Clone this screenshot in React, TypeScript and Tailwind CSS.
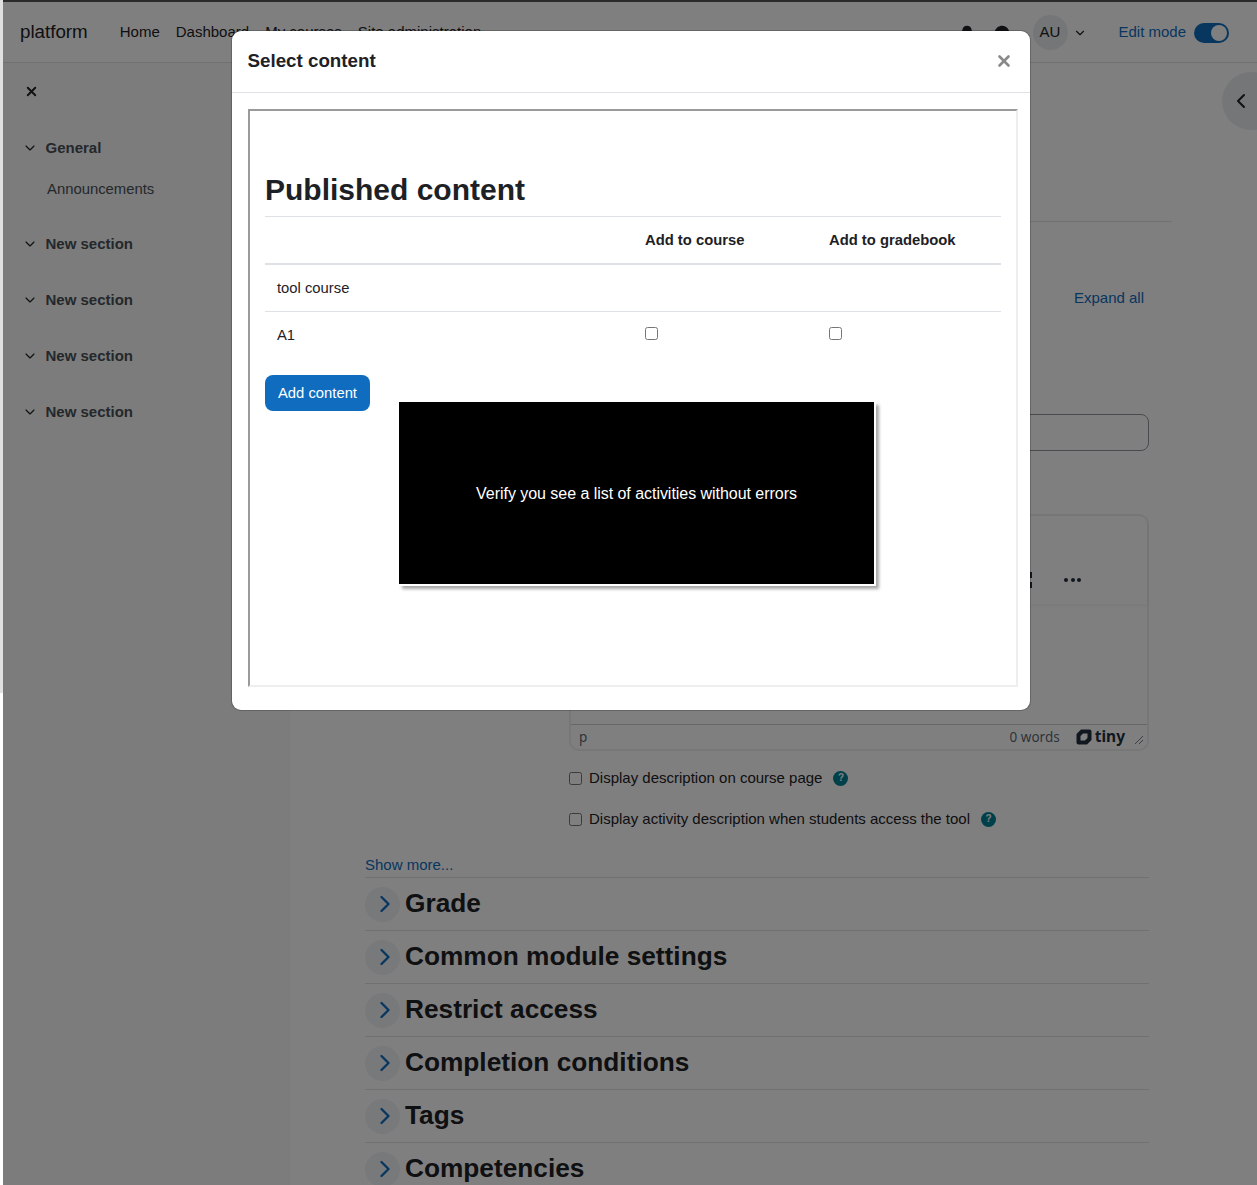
import { X, ChevronDown, ChevronRight, ChevronLeft, Bell, MessageCircle } from 'lucide-react';

const SECTIONS = ['New section', 'New section', 'New section', 'New section'];
const ACCORDION = ['Grade', 'Common module settings', 'Restrict access', 'Completion conditions', 'Tags', 'Competencies'];

function HelpDot() {
  return (
    <span className="ml-[11px] flex h-[15px] w-[15px] items-center justify-center rounded-full bg-[#008196] text-[10px] font-bold leading-none text-white">
      ?
    </span>
  );
}

function TinyLogo() {
  return (
    <svg width="16" height="16" viewBox="0 0 16 16">
      <path
        d="M5 0.5 L13.5 0.5 Q15.5 0.5 15.5 2.5 L15.5 11 L11 15.5 L2.5 15.5 Q0.5 15.5 0.5 13.5 L0.5 5 Z"
        fill="#222f3e"
      />
      <path d="M7 4.5 L11.5 4.5 L11.5 9 L9 11.5 L4.5 11.5 L4.5 7 Z" fill="#ffffff" />
    </svg>
  );
}

function Header() {
  return (
    <header className="flex h-[62px] shrink-0 items-center border-b border-[#dee2e6] bg-white pl-[17px] pr-[28px] pt-[2px]">
      <span className="text-[18.75px] text-[#1d2125]">platform</span>
      <nav className="ml-[32px] flex gap-[16px] text-[15px] text-[#1d2125]">
        <span>Home</span>
        <span>Dashboard</span>
        <span>My courses</span>
        <span>Site administration</span>
      </nav>
      <div className="ml-auto flex items-center">
        <Bell className="h-[16px] w-[16px] fill-[#1d2125] text-[#1d2125]" />
        <MessageCircle className="ml-[19px] h-[16px] w-[16px] fill-[#1d2125] text-[#1d2125]" />
        <span className="ml-[23px] flex h-[35px] w-[35px] items-center justify-center rounded-full bg-[#e9ecef] pr-[2px] text-[15px] text-[#1d2125]">
          AU
        </span>
        <ChevronDown className="ml-[5px] h-[14px] w-[14px] text-[#1d2125]" />
        <span className="ml-[31px] text-[15px] text-[#0f6cbf]">Edit mode</span>
        <span className="ml-[8px] flex h-[20px] w-[35px] items-center justify-end rounded-full bg-[#0f6cbf] pr-[2px]">
          <span className="h-[16px] w-[16px] rounded-full bg-white" />
        </span>
      </div>
    </header>
  );
}

function Sidebar() {
  return (
    <aside className="w-[287px] shrink-0 bg-[#f8f9fa] pl-[19px] text-[15px]">
      <X className="ml-[2px] mt-[21px] h-[15px] w-[15px] text-[#1d2125]" strokeWidth={3} />
      <div className="mt-[38px] flex items-center font-bold text-[#495057]">
        <ChevronDown className="h-[16px] w-[16px] text-[#1d2125]" strokeWidth={1.75} />
        <span className="ml-[7.5px]">General</span>
      </div>
      <div className="ml-[25px] mt-[18px] text-[14.85px] text-[#495057]">Announcements</div>
      <div className="mt-[33px] flex flex-col gap-[33.5px]">
        {SECTIONS.map((name, idx) => (
          <div key={idx} className="flex items-center font-bold text-[#495057]">
            <ChevronDown className="h-[16px] w-[16px] text-[#1d2125]" strokeWidth={1.75} />
            <span className="ml-[7.5px]">{name}</span>
          </div>
        ))}
      </div>
    </aside>
  );
}

function Main() {
  return (
    <main className="flex-1 bg-white pl-[25px] pr-[85px] text-[15px] text-[#1d2125]">
      <div className="h-[159px] border-b border-[#dee2e6]" />
      <div className="mr-[28px] mt-[67px] flex justify-end leading-[18px] text-[#0f6cbf]">Expand all</div>
      <div className="ml-[254px] mr-[23px] mt-[107px] h-[37px] rounded-[8px] border border-[#8f959e]" />
      <div className="ml-[254px] mr-[23px] mt-[63px] flex h-[237px] flex-col rounded-[10px] border-2 border-[#eeeeee]">
        <div className="flex h-[88px] items-end justify-end shadow-[0_2px_4px_rgba(34,47,62,0.06)]">
          <div className="mb-[16px] mr-[66px] flex items-center">
            <div className="mr-[32px] flex flex-col gap-[4px]">
              <span className="h-[6px] w-[4px] bg-[#222f3e]" />
              <span className="h-[6px] w-[4px] bg-[#222f3e]" />
            </div>
            <div className="flex gap-[2.5px]">
              <span className="h-[4px] w-[4px] rounded-full bg-[#222f3e]" />
              <span className="h-[4px] w-[4px] rounded-full bg-[#222f3e]" />
              <span className="h-[4px] w-[4px] rounded-full bg-[#222f3e]" />
            </div>
          </div>
        </div>
        <div className="flex-1" />
        <div className="flex h-[25px] items-center border-t border-[#cccccc] pl-[8px] pr-[3px] font-['Noto_Sans',sans-serif] text-[13.5px] text-[#222f3e]/75">
          <span>p</span>
          <span className="ml-auto mr-[16px]">0 words</span>
          <TinyLogo />
          <span className="ml-[3px] text-[15.5px] font-bold text-[#222f3e]">tiny</span>
          <svg width="10" height="10" viewBox="0 0 10 10" className="ml-[9px] mt-[6px]">
            <path d="M1 9 L9 1 M5 9 L9 5" stroke="#222f3e" strokeOpacity="0.6" fill="none" />
          </svg>
        </div>
      </div>
      <label className="ml-[254px] mt-[18px] flex h-[18px] items-center">
        <input type="checkbox" className="mr-[7px] h-[13px] w-[13px]" />
        <span>Display description on course page</span>
        <HelpDot />
      </label>
      <label className="ml-[254px] mt-[23px] flex h-[18px] items-center">
        <input type="checkbox" className="mr-[7px] h-[13px] w-[13px]" />
        <span>Display activity description when students access the tool</span>
        <HelpDot />
      </label>
      <div className="ml-[50px] mr-[23px] mt-[28px]">
        <div className="h-[21px] leading-[18px] text-[#0f6cbf]">Show more...</div>
        {ACCORDION.map(title => (
          <div key={title} className="flex h-[53px] items-center border-t border-[#dee2e6]">
            <span className="flex h-[35px] w-[35px] items-center justify-center rounded-full bg-[#f1f2f4] pb-[1px] pl-[5px]">
              <ChevronRight className="h-[28px] w-[28px] text-[#0f6cbf]" strokeWidth={2} />
            </span>
            <h3 className="ml-[5px] text-[26.25px] font-bold text-[#1d2125]">{title}</h3>
          </div>
        ))}
      </div>
    </main>
  );
}

function ContentFrame() {
  return (
    <div className="relative ml-[16px] mr-[12px] mt-[16px] h-[578px] overflow-hidden border-2 border-t-[#9a9a9a] border-l-[#9a9a9a] border-r-[#eeeeee] border-b-[#eeeeee] pl-[15px] pr-[15px] text-[14.8px] text-[#1d2125]">
      <h2 className="mt-[61px] text-[30px] font-bold leading-[36px]">Published content</h2>
      <table className="mt-[8px] w-full table-fixed border-t border-[#dee2e6] text-left">
        <thead>
          <tr className="h-[47px] border-b-2 border-[#dee2e6]">
            <th className="w-[368px]" />
            <th className="w-[184px] pl-[12px] font-bold">Add to course</th>
            <th className="pl-[12px] font-bold">Add to gradebook</th>
          </tr>
        </thead>
        <tbody>
          <tr className="h-[48px] border-b border-[#dee2e6]">
            <td className="pl-[12px]" colSpan={3}>tool course</td>
          </tr>
          <tr className="h-[47px]">
            <td className="pl-[12px]">A1</td>
            <td className="pb-[4px] pl-[12px]"><input type="checkbox" className="block h-[13px] w-[13px]" /></td>
            <td className="pb-[4px] pl-[12px]"><input type="checkbox" className="block h-[13px] w-[13px]" /></td>
          </tr>
        </tbody>
      </table>
      <button className="mt-[16px] h-[36px] w-[105px] rounded-[8px] bg-[#0f6cbf] pt-[1px] text-center text-white">Add content</button>
      {/* tour popup */}
      <div className="absolute left-[149px] top-[291px] flex h-[184px] w-[477px] items-center justify-center border-r-2 border-b-2 border-white bg-black pt-[2px] text-[16px] tracking-[-0.04px] text-white shadow-[3px_3px_3px_rgba(0,0,0,0.35)]">
        Verify you see a list of activities without errors
      </div>
    </div>
  );
}

export default function App() {
  return (
    <div className="relative h-[1185px] w-[1257px] overflow-hidden bg-white font-['Liberation_Sans',sans-serif]">
      <div className="flex h-full flex-col pl-[3px] pt-[1px]">
        <Header />
        <div className="flex flex-1">
          <Sidebar />
          <Main />
        </div>
      </div>

      {/* drawer toggle */}
      <div className="absolute left-[1222px] top-[72px] flex h-[58px] w-[58px] items-center rounded-full bg-[#e9ecef] pl-[7px]">
        <ChevronLeft className="h-[24px] w-[24px] text-[#1d2125]" strokeWidth={2} />
      </div>

      {/* backdrop */}
      <div className="absolute inset-0 bg-black/50" />
      <div className="absolute left-0 top-0 h-[2px] w-full bg-[#2b2b2b]" />
      <div className="absolute left-0 top-0 h-[693px] w-[3px] bg-[#e0e0e0]" />
      <div className="absolute left-0 top-[693px] h-[492px] w-[3px] bg-white" />

      {/* modal */}
      <div className="absolute left-[231px] top-[30px] h-[681px] w-[800px] rounded-[10px] border border-black/20 bg-white bg-clip-padding">
        <div className="flex h-[62px] items-center justify-between border-b border-[#dee2e6] pl-[15.5px] pr-[17px]">
          <h5 className="text-[18.75px] font-bold text-[#1d2125]">Select content</h5>
          <X className="-mt-[2px] h-[18px] w-[18px] text-[#8a8a8a]" strokeWidth={3.5} />
        </div>
        <ContentFrame />
      </div>
    </div>
  );
}
